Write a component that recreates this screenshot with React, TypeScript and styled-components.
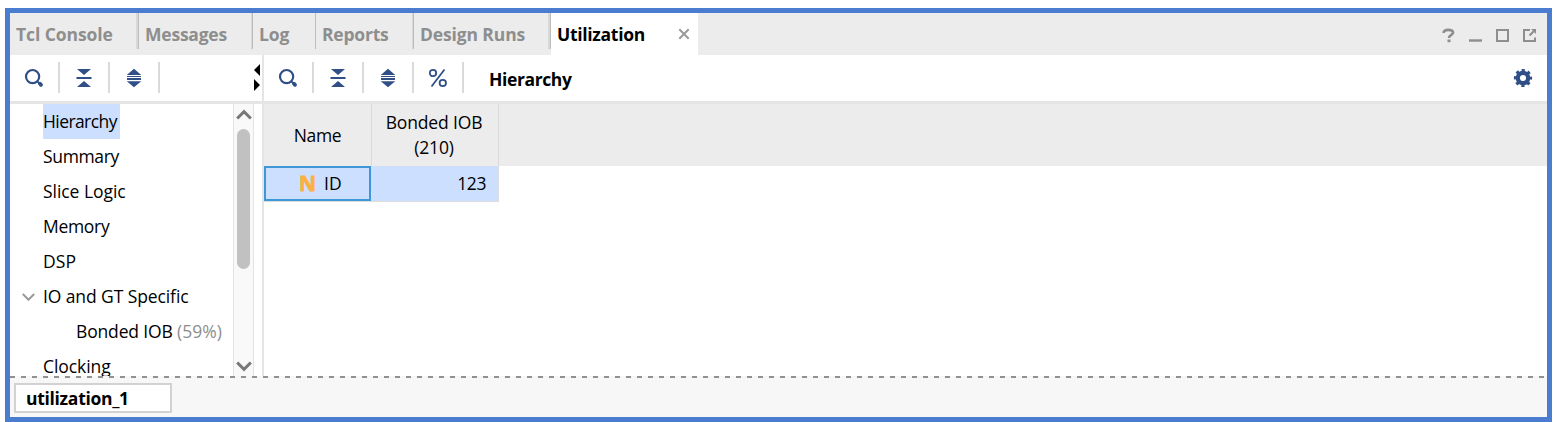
import React from "react";
import styled, { createGlobalStyle, css } from "styled-components";

const Global = createGlobalStyle`
  * { box-sizing: border-box; }
  body { margin: 0; background: #fff; overflow: hidden; }
  svg { display: block; flex: none; }
`;

const NAVY = "#2f4f86";
const GREY = "#8e8e8e";

const Page = styled.div`
  height: 422px;
  padding: 8px 4px 0 5px;
  font: 17.5px/35px "Open Sans", "Noto Sans", sans-serif;
  color: #000;
  white-space: nowrap;
`;

const Frame = styled.div`
  display: flex;
  flex-direction: column;
  height: 414px;
  border: 5px solid #4a7dcf;
  background: #fff;
`;

const Label = styled.span<{ $ls?: number; $bold?: boolean; $muted?: boolean }>`
  letter-spacing: ${(p) => p.$ls ?? -0.5}px;
  ${(p) => p.$bold && css`font-weight: 700;`}
  ${(p) => p.$muted && css`color: ${GREY};`}
`;

const TabBar = styled.div`
  display: flex;
  height: 42px;
  flex: none;
  background: #ececec;
`;

const Tab = styled.div<{ $width: number; $line: number }>`
  display: flex;
  width: ${(p) => p.$width}px;
  height: 36px;
  padding: 4px 0 0 6px;
  color: ${GREY};
  border-right: 1px solid #bdbdbd;
  box-shadow: inset -${(p) => p.$line - 1}px 0 #d8d8d8;
`;

const ActiveTab = styled.div`
  display: flex;
  justify-content: space-between;
  width: 147px;
  height: 42px;
  padding: 4px 8px 0 6px;
  background: #fff;
`;

const CloseIcon = styled.svg`
  margin-top: 11px;
`;

const WindowButtons = styled.div`
  display: flex;
  margin: 15px 10px 0 auto;
`;

const Columns = styled.div`
  display: flex;
  height: 321px;
  flex: none;
`;

const Sidebar = styled.div`
  width: 254px;
  border-right: 2px solid #e5e5e5;
`;

const Main = styled.div`
  flex: 1;
`;

const Toolbar = styled.div`
  display: flex;
  height: 49px;
  border-bottom: 3px solid #e5e5e5;
`;

const Tool = styled.div`
  display: flex;
  justify-content: center;
  width: 50px;
  height: 31px;
  margin-top: 7px;
  padding-top: 6px;
  border-right: 2px solid #dadada;
`;

const Title = styled.div`
  padding: 7px 0 0 25px;
`;

const Splitter = styled.svg`
  margin: 9px 2px 0 auto;
`;

const Gear = styled.svg`
  margin: 13px 14px 0 auto;
`;

const TreeArea = styled.div`
  display: flex;
  height: 272px;
  overflow: hidden;
`;

const Tree = styled.div`
  width: 223px;
`;

const TreeRow = styled.div<{ $indent?: number }>`
  display: flex;
  align-items: center;
  height: 35px;
  padding-left: ${(p) => p.$indent ?? 33}px;
`;

const Selected = styled.div`
  width: 77px;
  height: 35px;
  background: #ccdfff;
`;

const Chevron = styled.svg`
  margin-right: 8px;
`;

const ScrollBar = styled.div`
  display: flex;
  flex-direction: column;
  align-items: center;
  width: 21px;
  padding: 5px 0 4px;
  background: #f9f9f9;
  border: solid #e4e4e4;
  border-width: 0 1px;
`;

const Thumb = styled.div`
  width: 13px;
  height: 140px;
  margin: 9px 0 auto;
  border-radius: 6.5px;
  background: #c1c1c1;
`;

const HeaderRow = styled.div`
  display: flex;
  height: 62px;
  background: #ececec;
`;

const HeaderCell = styled.div<{ $width: number; $shift?: number }>`
  display: flex;
  flex-direction: column;
  align-items: center;
  justify-content: center;
  width: ${(p) => p.$width}px;
  padding-right: ${(p) => p.$shift ?? 0}px;
  line-height: 25px;
  border-right: 1px solid #d9d9d9;
`;

const Row = styled.div`
  display: flex;
  width: 235px;
  height: 36px;
  background: #ccdfff;
  border: solid #dddddd;
  border-width: 0 1px 1px 0;
`;

const NameCell = styled.div`
  display: flex;
  align-items: center;
  width: 107px;
  padding-left: 33px;
  line-height: 31px;
  border: 2px solid #3f98d6;
`;

const NetMark = styled.span`
  width: 25px;
  font: 700 21px/31px "Open Sans", sans-serif;
  -webkit-text-stroke: 0.8px #fbb040;
  color: #fbb040;
`;

const ValueCell = styled.div`
  flex: 1;
  padding-right: 12px;
  text-align: right;
`;

const Footer = styled.div`
  flex: 1;
  padding-left: 4px;
  background: #f7f7f7;
`;

const Dashes = styled.div`
  height: 2px;
  margin: 0 0 5px -4px;
  background: repeating-linear-gradient(90deg, #919191 0 5px, transparent 5px 11px);
`;

const FooterTab = styled.div`
  width: 158px;
  height: 30px;
  padding-left: 10px;
  line-height: 27px;
  background: #fff;
  border: 2px solid #d2d2d2;
`;

const SearchIcon = () => (
  <svg width="20" height="20" viewBox="0 0 20 20" fill="none" stroke={NAVY}>
    <circle cx="8.6" cy="8.6" r="6.6" strokeWidth="2.2" />
    <path d="M13.3 13.3 16 16" strokeWidth="1.8" />
    <path d="M15.9 15.7 17 16.8" strokeWidth="3.8" strokeLinecap="round" />
  </svg>
);

const CollapseIcon = () => (
  <svg width="20" height="20" viewBox="0 0 20 20" fill={NAVY}>
    <path d="M3 1h14L10 6.9zM2.5 9h15v2h-15zM3 19h14L10 13z" />
  </svg>
);

const ExpandIcon = () => (
  <svg width="20" height="20" viewBox="0 0 20 20" fill={NAVY}>
    <path d="M10 .8 17.2 6.9H2.8zM3 8h14v1H3zM3 10h14v2H3zM2.8 13.2h14.4L10 19.2z" />
  </svg>
);

const PercentIcon = () => (
  <svg width="20" height="20" viewBox="0 0 20 20" fill="none" stroke={NAVY} strokeWidth="1.8">
    <circle cx="5" cy="5" r="3.2" />
    <circle cx="14.8" cy="15" r="3.2" />
    <path d="M16.5 1.5 3.5 18.5" />
  </svg>
);

const tabs = [
  { name: "Tcl Console", width: 129, line: 3, ls: -0.08 },
  { name: "Messages", width: 114, line: 2, ls: -0.22 },
  { name: "Log", width: 63, line: 1, ls: -0.1 },
  { name: "Reports", width: 98, line: 2, ls: -0.22 },
  { name: "Design Runs", width: 137, line: 3, ls: -0.13 },
];

export default function App() {
  return (
    <Page>
      <Global />
      <Frame>
        <TabBar>
          {tabs.map((t) => (
            <Tab key={t.name} $width={t.width} $line={t.line}>
              <Label $bold $ls={t.ls}>{t.name}</Label>
            </Tab>
          ))}
          <ActiveTab>
            <Label $bold $ls={-0.3}>Utilization</Label>
            <CloseIcon width="12" height="12" viewBox="0 0 12 12" stroke="#999" strokeWidth="2">
              <path d="M1.3 1.3 10.7 10.7M10.7 1.3 1.3 10.7" />
            </CloseIcon>
          </ActiveTab>
          <WindowButtons>
            <svg width="96" height="16" viewBox="0 0 96 16" fill="none" stroke={GREY} strokeWidth="2">
              <path d="M2.6 5C2.6 .9 12.1.9 12.1 4.6 12.1 7 8 6.8 8 10" strokeWidth="2.6" />
              <path d="M8 11.5v2.7" strokeWidth="3" />
              <path d="M28 12.5h13" strokeWidth="2.4" />
              <path d="M56 2h11v11H56z" />
              <path d="M89 2h-6v11h11V9.5M88.5 7.5 93 3" />
              <path d="M90 1h5v5z" fill={GREY} stroke="none" />
            </svg>
          </WindowButtons>
        </TabBar>

        <Columns>
          <Sidebar>
            <Toolbar>
              <Tool><SearchIcon /></Tool>
              <Tool><CollapseIcon /></Tool>
              <Tool><ExpandIcon /></Tool>
              <Splitter width="6" height="27" viewBox="0 0 6 27">
                <path d="M6 0v12L0 6zM0 15v12l6-6z" />
              </Splitter>
            </Toolbar>
            <TreeArea>
              <Tree>
                <TreeRow><Selected><Label $ls={-0.58}>Hierarchy</Label></Selected></TreeRow>
                <TreeRow><Label $ls={-0.35}>Summary</Label></TreeRow>
                <TreeRow><Label $ls={-0.05}>Slice Logic</Label></TreeRow>
                <TreeRow><Label $ls={-0.3}>Memory</Label></TreeRow>
                <TreeRow><Label $ls={0.1}>DSP</Label></TreeRow>
                <TreeRow $indent={12}>
                  <Chevron width="13" height="8" viewBox="0 0 13 8" fill="none" stroke="#999" strokeWidth="2">
                    <path d="M.8 1 6.5 6.7 12.2 1" />
                  </Chevron>
                  <Label $ls={-0.1}>IO and GT Specific</Label>
                </TreeRow>
                <TreeRow $indent={66}>
                  <Label $ls={-0.15}>Bonded IOB <Label $muted $ls={0}>(59%)</Label></Label>
                </TreeRow>
                <TreeRow><Label $ls={-0.08}>Clocking</Label></TreeRow>
              </Tree>
              <ScrollBar>
                <svg width="16" height="11" viewBox="0 0 16 11" fill="none" stroke="#777" strokeWidth="3">
                  <path d="M1.2 9.5 8 2.7l6.8 6.8" />
                </svg>
                <Thumb />
                <svg width="16" height="11" viewBox="0 0 16 11" fill="none" stroke="#777" strokeWidth="3">
                  <path d="M1.2 1.5 8 8.3l6.8-6.8" />
                </svg>
              </ScrollBar>
            </TreeArea>
          </Sidebar>

          <Main>
            <Toolbar>
              <Tool><SearchIcon /></Tool>
              <Tool><CollapseIcon /></Tool>
              <Tool><ExpandIcon /></Tool>
              <Tool><PercentIcon /></Tool>
              <Title><Label $bold $ls={-0.38}>Hierarchy</Label></Title>
              <Gear width="20" height="20" viewBox="0 0 20 20" fill="none" stroke={NAVY}>
                <circle cx="10" cy="10" r="5.2" strokeWidth="4.2" />
                <circle cx="10" cy="10" r="7.8" strokeWidth="2.6" strokeDasharray="3.1 3.026" strokeDashoffset="1.55" />
              </Gear>
            </Toolbar>
            <HeaderRow>
              <HeaderCell $width={108}><Label $ls={-0.4}>Name</Label></HeaderCell>
              <HeaderCell $width={127} $shift={2}>
                <Label $ls={-0.15}>Bonded IOB</Label>
                <Label $ls={-0.2}>(210)</Label>
              </HeaderCell>
            </HeaderRow>
            <Row>
              <NameCell><NetMark>N</NetMark><Label $ls={0.2}>ID</Label></NameCell>
              <ValueCell><Label $ls={-0.4}>123</Label></ValueCell>
            </Row>
          </Main>
        </Columns>

        <Footer>
          <Dashes />
          <FooterTab><Label $bold $ls={-0.3}>utilization_1</Label></FooterTab>
        </Footer>
      </Frame>
    </Page>
  );
}
